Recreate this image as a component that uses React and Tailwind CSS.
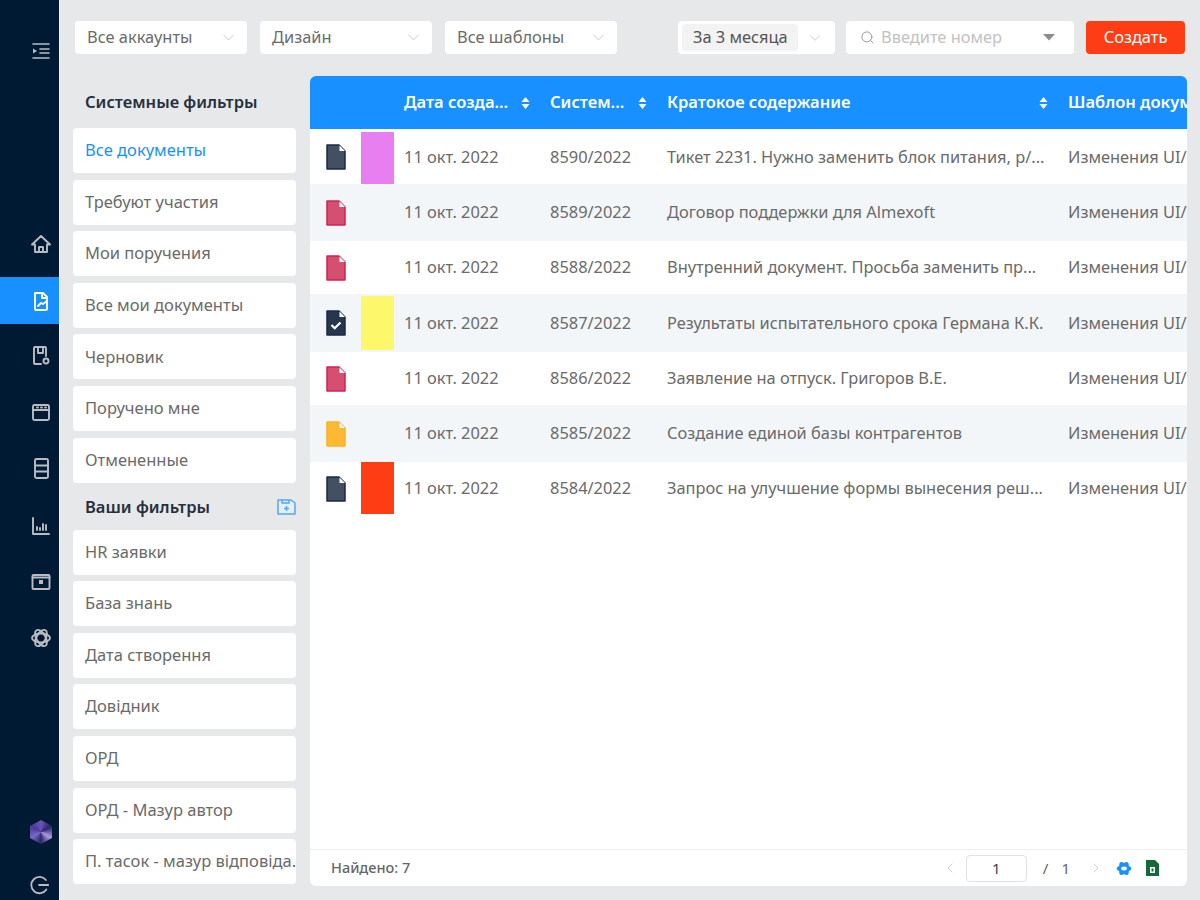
import { ChevronDown, ChevronLeft, ChevronRight, Search } from 'lucide-react';

const systemFilters = ['Все документы', 'Требуют участия', 'Мои поручения', 'Все мои документы', 'Черновик', 'Поручено мне', 'Отмененные'];
const userFilters = ['HR заявки', 'База знань', 'Дата створення', 'Довідник', 'ОРД', 'ОРД - Мазур автор', 'П. тасок - мазур відповіда..'];

const navy = { fill: '#434f63', stroke: '#1b2945' };
const red = { fill: '#d44f70', stroke: '#cf2350' };
const amber = { fill: '#fdb933', stroke: '#fbb124' };

const rows = [
    { num: '8590/2022', text: 'Тикет 2231. Нужно заменить блок питания, р/...', icon: navy, h: 'h-[55px] pt-[1px]', mark: 'w-full h-[52px] mt-auto bg-[#e77ff0]' },
    { num: '8589/2022', text: 'Договор поддержки для Almexoft', icon: red, h: 'h-[57px]' },
    { num: '8588/2022', text: 'Внутренний документ. Просьба заменить пр...', icon: red, h: 'h-[53px]' },
    { num: '8587/2022', text: 'Результаты испытательного срока Германа К.К.', icon: { fill: '#27364f', stroke: '#1b2945' }, h: 'h-[58px]', mark: 'w-full h-[54px] my-auto bg-[#fdf76b]', check: true },
    { num: '8586/2022', text: 'Заявление на отпуск. Григоров В.Е.', icon: red, h: 'h-[53px]' },
    { num: '8585/2022', text: 'Создание единой базы контрагентов', icon: amber, h: 'h-[57px]' },
    { num: '8584/2022', text: 'Запрос на улучшение формы вынесения реш...', icon: navy, h: 'h-[53px]', mark: 'w-full h-[52px] mb-auto bg-[#ff3d14]' },
];

const DocIcon = ({ color, check }) => (
    <svg width="20" height="26" viewBox="0 0 20 26">
        <path d="M1 1h12l6 6v18H1z" fill={color.fill} stroke={color.stroke} strokeWidth="1.5" strokeLinejoin="round" />
        <path d="M13.5 1.5v5.5h5.5z" fill="#fff" />
        {check && <path d="M5.5 15l3.2 3.2 5.8-5.7" fill="none" stroke="#fff" strokeWidth="2.2" />}
    </svg>
);

const SortIcon = () => (
    <svg width="9" height="14" viewBox="0 0 9 14" fill="#fff" className="shrink-0">
        <path d="M4.5 1L8.5 6H.5z" />
        <path d="M4.5 13L.5 8h8z" />
    </svg>
);

const NavIcon = ({ children, active, className }) => (
    <div className={`flex items-center w-full h-[47px] pl-[30px] shrink-0 ${active ? 'bg-[#1890ff]' : ''} ${className}`}>
        <svg width="22" height="22" viewBox="0 0 22 22" fill="none" stroke={active ? '#ffffff' : '#b9bdc3'} strokeWidth="1.9" strokeLinejoin="round" strokeLinecap="round">
            {children}
        </svg>
    </div>
);

const Select = ({ label, className }) => (
    <div className={`h-[33px] bg-white rounded-sm flex items-center justify-between pl-3 pr-[9px] ${className}`}>
        <span className="text-[16.4px] text-[#6b6b6b]">{label}</span>
        <ChevronDown size={19} strokeWidth={1.2} className="text-[#c4c8cc]" />
    </div>
);

const FilterItem = ({ label, active }) => (
    <div className={`h-[45px] shrink-0 bg-white rounded-sm flex items-center pl-3 text-[16.5px] whitespace-nowrap overflow-hidden ${active ? 'text-[#1890ff]' : 'text-[#6a6a6a]'}`}>
        {label}
    </div>
);

export default function App() {
    return (
        <div className="w-[1200px] h-[900px] flex overflow-hidden bg-[#e6e8ea] text-[#666]" style={{ fontFamily: '"Noto Sans", sans-serif' }}>
            {/* Sidebar */}
            <aside className="w-[59px] shrink-0 bg-[#011a33] flex flex-col">
                <NavIcon className="mt-[27px]">
                    <path d="M3 4h16M10 9h9M10 13h9M3 18h16" strokeWidth="1.6" />
                    <path d="M3 8.5l4 2.5-4 2.5z" fill="#b9bdc3" stroke="none" />
                </NavIcon>
                <NavIcon className="mt-[146px]">
                    <path d="M2 11.5L11 3l9 8.5h-3V19H5v-7.5z" />
                    <path d="M9 19v-5h4v5" />
                </NavIcon>
                <NavIcon active className="mt-[10px]">
                    <path d="M5 3h8l4 4v12a1 1 0 01-1 1H6a1 1 0 01-1-1z" />
                    <path d="M12 3v5h5M8 16l3-3 2 1 4-3" />
                </NavIcon>
                <NavIcon className="mt-[7px]">
                    <path d="M11 20H5a1 1 0 01-1-1V4a1 1 0 011-1h10a1 1 0 011 1v8" />
                    <path d="M8 3v6h5V3" />
                    <circle cx="16" cy="17" r="2.5" />
                </NavIcon>
                <NavIcon className="mt-[10px]">
                    <rect x="3" y="4" width="16" height="15" rx="1.5" />
                    <path d="M3 9h16M7 6.5h1M11 6.5h1M15 6.5h1" />
                </NavIcon>
                <NavIcon className="mt-[9px]">
                    <rect x="5" y="2" width="13" height="19" rx="1.5" />
                    <path d="M5 8.5h13M5 14.5h13" />
                </NavIcon>
                <NavIcon className="mt-[11px]">
                    <path d="M3 3v16h16" />
                    <path d="M7 15v-3M10 15v-2M13 15V9M16 15v-5" />
                </NavIcon>
                <NavIcon className="mt-[9px]">
                    <rect x="2.5" y="4" width="17" height="14" rx="1" />
                    <path d="M2.5 6.5h17" />
                    <rect x="9" y="9" width="4" height="4" fill="#b9bdc3" stroke="none" />
                </NavIcon>
                <NavIcon className="mt-[9px]">
                    <ellipse cx="11" cy="11" rx="9" ry="4.5" />
                    <ellipse cx="11" cy="11" rx="9" ry="4.5" transform="rotate(60 11 11)" />
                    <ellipse cx="11" cy="11" rx="9" ry="4.5" transform="rotate(120 11 11)" />
                </NavIcon>
                <div className="mt-auto ml-[30px] w-[22px] h-[24px] bg-[conic-gradient(#6a54b8,#2a2470,#b09ae0,#2c2668,#7a68c8,#4a3a98,#6a54b8)] [clip-path:polygon(50%_0,100%_25%,100%_75%,50%_100%,0_75%,0_25%)]" />
                <div className="mt-[31px] mb-[5px] ml-[30px] h-[20px]">
                    <svg width="20" height="20" viewBox="0 0 22 22" fill="none" stroke="#b9bdc3" strokeWidth="2" strokeLinecap="round">
                        <path d="M17.5 5.5A9 9 0 1018 16" />
                        <path d="M10 11h10" />
                    </svg>
                </div>
            </aside>

            {/* Main area */}
            <main className="flex-1 flex flex-col min-w-0 border-l border-[#f2f2f2] pl-[13px] pr-[13px]">
                <div className="flex items-center h-[33px] mt-[21px] shrink-0">
                    <Select label="Все аккаунты" className="w-[172px] ml-[2px]" />
                    <Select label="Дизайн" className="w-[172px] ml-[13px]" />
                    <Select label="Все шаблоны" className="w-[172px] ml-[13px]" />
                    <div className="w-[157px] h-[33px] ml-[61px] bg-white rounded-sm flex items-center justify-between pl-1 pr-[11px]">
                        <span className="h-[27px] pl-[11px] pr-[10px] flex items-center rounded-sm bg-[#f3f3f3] text-[16.4px] text-[#555] whitespace-nowrap">За 3 месяца</span>
                        <ChevronDown size={18} strokeWidth={1.2} className="text-[#c4c8cc]" />
                    </div>
                    <div className="w-[228px] h-[33px] ml-[11px] bg-white rounded-sm flex items-center pl-[14px] pr-[19px]">
                        <Search size={15} strokeWidth={1.6} className="text-[#9a9a9a]" />
                        <span className="ml-[6px] text-[16.4px] text-[#c2c2c2] whitespace-nowrap">Введите номер</span>
                        <svg width="12" height="7" viewBox="0 0 12 7" fill="#8c8c8c" className="ml-auto"><path d="M0 0h12L6 6.5z" /></svg>
                    </div>
                    <button className="w-[99px] h-[33px] ml-[12px] bg-[#ff3d14] rounded-sm text-white text-[16.4px]">Создать</button>
                </div>

                <div className="flex flex-1 min-h-0 mt-[22px] mb-[14px]">
                    {/* Filters */}
                    <div className="w-[223px] shrink-0 flex flex-col">
                        <div className="h-[52px] shrink-0 flex items-center px-3 text-[16.5px] font-semibold text-[#262f3d] whitespace-nowrap">Системные фильтры</div>
                        <div className="flex flex-col gap-[6.6px]">
                            {systemFilters.map((f, i) => <FilterItem key={f} label={f} active={i === 0} />)}
                        </div>
                        <div className="h-[47px] shrink-0 flex items-center justify-between pl-3 pt-[2px] text-[16.5px] font-semibold text-[#262f3d]">
                            <span>Ваши фильтры</span>
                            <svg width="19" height="18" viewBox="0 0 19 18" fill="none" stroke="#5aa5f5" strokeWidth="1.5" strokeLinejoin="round">
                                <path d="M1 2h13l4 3v11H1z" fill="#e3effb" />
                                <path d="M5 2v3h7V2" />
                                <path d="M9.5 8v5M7 10.5h5" />
                            </svg>
                        </div>
                        <div className="flex flex-col gap-[6.6px]">
                            {userFilters.map(f => <FilterItem key={f} label={f} />)}
                        </div>
                    </div>

                    {/* Table */}
                    <section className="w-[877px] ml-[14px] flex flex-col bg-white rounded-md overflow-hidden">
                        <div className="h-[53px] shrink-0 flex items-center bg-[#1890ff] text-white text-[16.5px] font-semibold whitespace-nowrap">
                            <div className="w-[84px] shrink-0" />
                            <div className="w-[146px] shrink-0 flex items-center justify-between pl-[10px] pr-[10px]"><span>Дата созда...</span><SortIcon /></div>
                            <div className="w-[117px] shrink-0 flex items-center justify-between pl-[10px] pr-[10px]"><span>Систем...</span><SortIcon /></div>
                            <div className="w-[401px] shrink-0 flex items-center justify-between pl-[10px] pr-[10px]"><span>Кратокое содержание</span><SortIcon /></div>
                            <div className="pl-[10px]">Шаблон документа</div>
                        </div>
                        <div className="flex-1 min-h-0">
                            {rows.map((r, i) => (
                                <div key={r.num} className={`flex items-center text-[16.4px] text-[#6a6a6a] whitespace-nowrap ${r.h} ${i % 2 === 1 ? 'bg-[#f3f6f8]' : 'bg-white'}`}>
                                    <div className="w-[51px] shrink-0 flex justify-center"><DocIcon color={r.icon} check={r.check} /></div>
                                    <div className="w-[33px] shrink-0 h-full flex flex-col">
                                        {r.mark && <div className={r.mark} />}
                                    </div>
                                    <div className="w-[146px] shrink-0 pl-[10px]">11 окт. 2022</div>
                                    <div className="w-[117px] shrink-0 pl-[10px]">{r.num}</div>
                                    <div className="w-[401px] shrink-0 pl-[10px]">{r.text}</div>
                                    <div className="pl-[10px]">Изменения UI/UX</div>
                                </div>
                            ))}
                        </div>
                        <div className="h-[37px] shrink-0 border-t border-[#eceef0] flex items-center pl-[21px] pr-[27px] text-[#666]">
                            <span className="text-[14.5px] font-medium">Найдено: 7</span>
                            <ChevronLeft size={16} strokeWidth={1.3} className="ml-auto text-[#c8c8c8]" />
                            <div className="w-[61px] h-[27px] ml-[8px] border border-[#dfe1e3] rounded flex items-center justify-center text-[15px] text-[#444]">1</div>
                            <span className="ml-[16px] text-[15px]">/</span>
                            <span className="ml-[13px] text-[15px]">1</span>
                            <ChevronRight size={16} strokeWidth={1.3} className="ml-[18px] text-[#c8c8c8]" />
                            <svg width="16" height="17" viewBox="0 0 22 22" className="ml-[12px]" fill="#1890ff">
                                <ellipse cx="11" cy="11" rx="10" ry="5" />
                                <ellipse cx="11" cy="11" rx="10" ry="5" transform="rotate(60 11 11)" />
                                <ellipse cx="11" cy="11" rx="10" ry="5" transform="rotate(120 11 11)" />
                                <ellipse cx="11" cy="11" rx="4" ry="2.6" fill="#fff" />
                            </svg>
                            <svg width="15" height="18" viewBox="0 0 15 18" className="ml-[13px]">
                                <path d="M1 1h9l4 4v12H1z" fill="#15683a" />
                                <rect x="5" y="8" width="5" height="6" fill="#fff" />
                                <rect x="6.5" y="9.5" width="2" height="3" fill="#15683a" />
                            </svg>
                        </div>
                    </section>
                </div>
            </main>
        </div>
    );
}
